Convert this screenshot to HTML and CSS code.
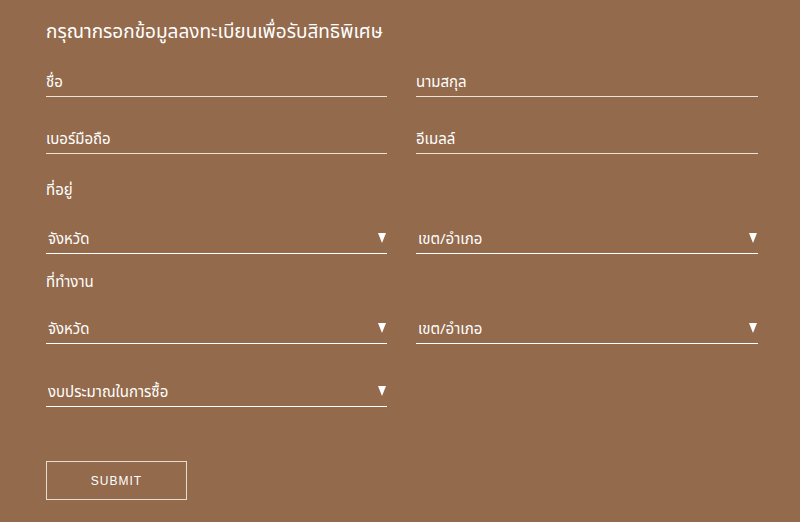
FILE: index.html
```html
<!DOCTYPE html>
<html lang="th">
<head>
    <meta charset="UTF-8">
    <meta name="viewport" content="width=device-width, initial-scale=1.0">
    <title>ลงทะเบียน</title>
    <link rel="stylesheet" href="styles.css">
</head>
<body>
    <form class="register-form">
        <h2>กรุณากรอกข้อมูลลงทะเบียนเพื่อรับสิทธิพิเศษ</h2>

        <div class="form-row first">
            <input type="text" placeholder="ชื่อ">
            <input type="text" placeholder="นามสกุล">
        </div>
        <div class="form-row">
            <input type="text" placeholder="เบอร์มือถือ">
            <input type="email" placeholder="อีเมลล์">
        </div>

        <p class="group-label">ที่อยู่</p>
        <div class="form-row select-row">
            <div class="select-wrap">
                <select><option>จังหวัด</option></select>
            </div>
            <div class="select-wrap">
                <select><option>เขต/อำเภอ</option></select>
            </div>
        </div>

        <p class="group-label work">ที่ทำงาน</p>
        <div class="form-row select-row work-row">
            <div class="select-wrap">
                <select><option>จังหวัด</option></select>
            </div>
            <div class="select-wrap">
                <select><option>เขต/อำเภอ</option></select>
            </div>
        </div>

        <div class="form-row budget-row">
            <div class="select-wrap">
                <select><option>งบประมาณในการซื้อ</option></select>
            </div>
        </div>

        <button type="submit">SUBMIT</button>
    </form>
</body>
</html>
```

FILE: styles.css
```css
body {
    margin: 0;
    padding: 0;
    background: #946a4c;
    color: #fff;
    font-family: "Noto Sans Thai", "Noto Sans", "Liberation Sans", sans-serif;
}
.register-form {
    width: 712px;
    padding: 22px 0 0 46px;
}
.register-form h2 {
    margin: 0;
    font-size: 19px;
    font-weight: normal;
    line-height: 22px;
}
.form-row {
    display: grid;
    grid-template-columns: 341px 342px;
    column-gap: 29px;
    margin-top: 27px;
}
.form-row.first {
    margin-top: 23px;
}
.form-row input,
.form-row select {
    display: block;
    width: 100%;
    height: 30px;
    box-sizing: border-box;
    margin: 0;
    padding: 1px 0 0;
    background: transparent;
    border: none;
    border-bottom: 1px solid #ece2d8;
    color: #fff;
    font-family: inherit;
    font-size: 15px;
    outline: none;
}
.form-row input::placeholder {
    color: #fff;
    opacity: 1;
}
.form-row select {
    appearance: none;
    -webkit-appearance: none;
    padding-left: 2px;
    border-bottom-color: #fff;
    border-radius: 0;
}
.select-wrap {
    position: relative;
}
.select-wrap::after {
    content: "";
    position: absolute;
    right: 1px;
    top: 9px;
    border-left: 4.5px solid transparent;
    border-right: 4.5px solid transparent;
    border-top: 10px solid #fff;
    pointer-events: none;
}
.group-label {
    margin: 27px 0 0;
    font-size: 15px;
    line-height: 20px;
}
.group-label.work {
    margin-top: 19px;
}
.select-row {
    margin-top: 23px;
}
.select-row.work-row {
    margin-top: 21px;
}
.budget-row {
    margin-top: 33px;
}
.register-form button {
    display: block;
    margin-top: 54px;
    width: 141px;
    height: 39px;
    background: transparent;
    border: 1px solid #e8dcd0;
    color: #fff;
    font-family: "Liberation Sans", Arial, sans-serif;
    font-size: 12px;
    letter-spacing: 1px;
    cursor: pointer;
}
```
